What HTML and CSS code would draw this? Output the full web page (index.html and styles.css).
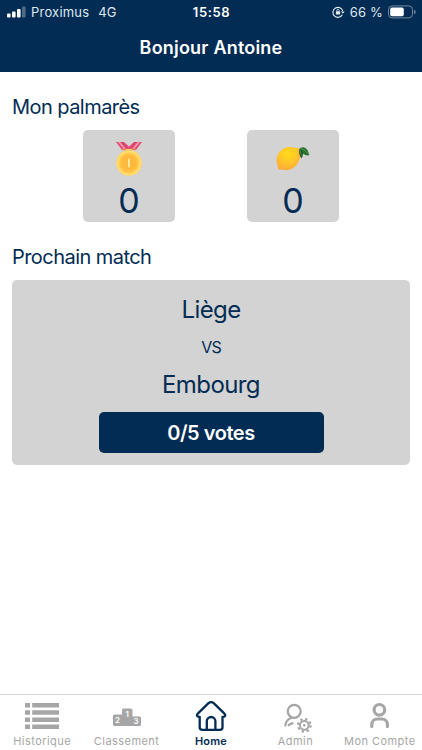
FILE: index.html
```html
<!DOCTYPE html>
<html lang="fr">
<head>
    <meta charset="UTF-8">
    <meta name="viewport" content="width=device-width, initial-scale=1.0">
    <title>Bonjour Antoine</title>
    <link rel="stylesheet" href="styles.css">
</head>
<body>
    <div class="app">
        <header class="header">
            <div class="status-bar">
                <div class="status-left">
                    <svg class="signal" width="19" height="12" viewBox="0 0 19 12" fill="#fff">
                        <rect x="0" y="7.5" width="3.6" height="4" rx="1"/>
                        <rect x="5" y="5.5" width="3.6" height="6" rx="1"/>
                        <rect x="10" y="3" width="3.6" height="8.5" rx="1"/>
                        <rect x="15" y="0.5" width="3.6" height="11" rx="1" opacity="0.3"/>
                    </svg>
                    <span class="carrier">Proximus</span>
                    <span class="network">4G</span>
                </div>
                <span class="time">15:58</span>
                <div class="status-right">
                    <svg width="13" height="12" viewBox="0 0 13 12" fill="none" stroke="#e6ecf3">
                        <path d="M10.3 8.8A5 5 0 1 1 10.8 5.2" stroke-width="1.1"/>
                        <path d="M9 5.4h3.6l-1.8 2.4z" fill="#e6ecf3" stroke="none"/>
                        <rect x="3.9" y="5.3" width="4.2" height="3.3" rx=".5" fill="#e6ecf3" stroke="none"/>
                        <path d="M4.8 5.5V4.6a1.2 1.2 0 0 1 2.4 0v.9" stroke-width=".8"/>
                    </svg>
                    <span class="battery-level">66 %</span>
                    <svg class="battery" width="28" height="14" viewBox="0 0 28 14">
                        <rect x=".5" y=".9" width="24" height="12" rx="3.6" fill="none" stroke="#7489a1"/>
                        <rect x="2.2" y="2.6" width="13.6" height="8.6" rx="1.8" fill="#fff"/>
                        <path d="M26 4.8a2.3 2.3 0 0 1 0 4.4z" fill="#7489a1"/>
                    </svg>
                </div>
            </div>
            <h1>Bonjour Antoine</h1>
        </header>

        <main class="content">
            <h2>Mon palmarès</h2>
            <div class="awards">
                <div class="award">
                    <svg width="34" height="36" viewBox="0 0 34 36">
                        <path d="M4 2h8l5 4.5L22 2h8l-6 8H10z" fill="#e84c75"/>
                        <path d="M7 2l6 7M27 2l-6 7" stroke="#f7a3b5" stroke-width="1.3"/>
                        <path d="M10 2l6 7M24 2l-6 7" stroke="#b53b69" stroke-width=".8"/>
                        <path d="M10 9.5h14" stroke="#e8804f" stroke-width="1.5"/>
                        <rect x="14" y="9" width="6" height="3" fill="#f1cc79"/>
                        <circle cx="17" cy="23" r="12.8" fill="#ffd45c"/>
                        <circle cx="17" cy="23" r="11.6" fill="none" stroke="#ffe27a"/>
                        <circle cx="17" cy="23" r="9.4" fill="#fdb93b"/>
                        <circle cx="17" cy="23" r="8.2" fill="none" stroke="#ffca51" stroke-width=".8"/>
                        <rect x="16" y="18.5" width="2" height="9" rx=".8" fill="#ffe99a"/>
                    </svg>
                    <span class="score">0</span>
                </div>
                <div class="award">
                    <svg width="34" height="36" viewBox="0 0 34 36">
                        <defs>
                            <radialGradient id="lemon" cx=".48" cy=".3" r=".7">
                                <stop offset="0" stop-color="#ffdc16"/>
                                <stop offset=".55" stop-color="#ffc52a"/>
                                <stop offset="1" stop-color="#ffaa38"/>
                            </radialGradient>
                        </defs>
                        <path d="M2.2 29.6C2.6 26.5 0.4 24.5 0.6 19.6 0.9 12.5 7 7.3 13.5 7c3.5-.2 5.5 1.3 8.8 1 2.3 1.5 1.2 3.2 1.8 5.5.8 3.5-.8 8.5-4.3 12.300-3.500 3.800-8 5.200-12.300 3.900-2-.6-3.600.7-5.300-.1z" fill="url(#lemon)"/>
                        <path d="M23 9.200C25.500 5.500 32 6.500 33.300 15.300 28.600 16 25.500 13 24.600 9.500z" fill="#28722f"/>
                        <path d="M23.600 9C22.500 12 23.300 16 25.500 18.300 27.500 15.500 27.500 11.500 24.500 9z" fill="#17561f"/>
                        <path d="M24.500 8.700c3 .3 6 2.400 8 5.700M24 10l1.400 6" fill="none" stroke="#70a767" stroke-width=".6"/>
                    </svg>
                    <span class="score">0</span>
                </div>
            </div>

            <h2>Prochain match</h2>
            <section class="match">
                <p class="team">Liège</p>
                <p class="versus">VS</p>
                <p class="team">Embourg</p>
                <button class="btn">0/5 votes</button>
            </section>
        </main>

        <nav class="tab-bar">
            <a class="tab">
                <svg width="34" height="34" viewBox="0 0 34 34" fill="currentColor">
                    <path d="M0 4h5v4.500H0zM7.200 4H34v4.500H7.200zM0 11.200h5v4.500H0zM7.200 11.200H34v4.500H7.200zM0 18.400h5v4.500H0zM7.200 18.400H34v4.500H7.200zM0 25.600h5v4.500H0zM7.200 25.600H34v4.500H7.200z"/>
                </svg>
                <span>Historique</span>
            </a>
            <a class="tab">
                <svg width="34" height="34" viewBox="0 0 34 34" fill="currentColor">
                    <path d="M3 17q0-1.500 1.500-1.500H12V11q0-1.500 1.500-1.500h7.500q1.500 0 1.500 1.500v6.500H29.500q1.500 0 1.500 1.500v6.500q0 1.500-1.500 1.500h-25Q3 27 3 25.500z"/>
                    <g class="podium-numbers">
                        <text x="7.600" y="24.300">2</text>
                        <text x="17.300" y="17.800">1</text>
                        <text x="26" y="25.300">3</text>
                    </g>
                </svg>
                <span>Classement</span>
            </a>
            <a class="tab active">
                <svg width="34" height="34" viewBox="0 0 34 34" fill="none" stroke="currentColor" stroke-width="2.300" stroke-linejoin="round" stroke-linecap="round">
                    <path d="M5.700 17.800v10.400q0 2.600 2.600 2.600h17.600q2.600 0 2.600-2.600V17.800c3 .3 3.500-1.900 1.700-3.500L19.700 4.200q-2.600-2.200-5.200 0L4 14.300c-1.800 1.600-1.300 3.800 1.700 3.500z"/>
                    <path d="M12.800 30.600v-8.300a4.300 4.300 0 0 1 8.600 0v8.300"/>
                </svg>
                <span>Home</span>
            </a>
            <a class="tab">
                <svg width="34" height="34" viewBox="0 0 34 34" fill="none" stroke="currentColor">
                    <circle cx="16.200" cy="12.300" r="6.500" stroke-width="2.300"/>
                    <path d="M7.300 27.500c0-4.500 2.200-7.400 6.300-8.700M9.800 26.500l5.500-2.800" stroke-width="2.200"/>
                    <circle cx="26.300" cy="26.300" r="4.400" stroke-width="2"/>
                    <circle cx="26.300" cy="26.300" r="6.300" stroke-width="2.200" stroke-dasharray="2.400 2.548"/>
                    <circle cx="26.300" cy="26.300" r="1.200" fill="currentColor" stroke="none"/>
                </svg>
                <span>Admin</span>
            </a>
            <a class="tab">
                <svg width="34" height="34" viewBox="0 0 34 34" fill="none" stroke="currentColor" stroke-width="3.200" stroke-linecap="round">
                    <circle cx="16.400" cy="10.800" r="5.300"/>
                    <path d="M8.800 27.500v-2a5.500 5.500 0 0 1 5.500-5.500h4.600a5.500 5.500 0 0 1 5.500 5.500v2"/>
                </svg>
                <span>Mon Compte</span>
            </a>
        </nav>
    </div>
</body>
</html>
```
FILE: styles.css
```css
:root {
    --primary-color: #022c53;
    --card-bg: #d3d3d3;
    --tab-color: #a6a6a6;
    --border-color: #d4d4d4;
}

* {
    margin: 0;
    padding: 0;
    box-sizing: border-box;
    font-family: Inter, 'Helvetica Neue', 'Liberation Sans', sans-serif;
}

body {
    background-color: #fff;
    color: var(--primary-color);
}

svg {
    display: block;
    flex-shrink: 0;
}

.app {
    display: flex;
    flex-direction: column;
    height: 100vh;
    min-height: 750px;
}

.header {
    height: 72px;
    background-color: var(--primary-color);
    color: #fff;
}

.status-bar {
    display: grid;
    grid-template-columns: 1fr auto 1fr;
    align-items: center;
    height: 24px;
    padding: 0 6px 0 7px;
    font-size: 13px;
    line-height: 24px;
}

.status-left,
.status-right {
    display: flex;
    align-items: center;
    color: #dfe7ef;
}

.status-right {
    justify-content: flex-end;
}

.carrier {
    margin-left: 5px;
    letter-spacing: 0.2px;
}

.network {
    margin-left: 9px;
}

.time {
    font-weight: 600;
    letter-spacing: 0.6px;
}

.battery-level {
    margin: 0 5px 0 5px;
    letter-spacing: 0.2px;
}

h1 {
    font-size: 18px;
    font-weight: 600;
    line-height: 48px;
    text-align: center;
    letter-spacing: 0.2px;
}

.content {
    flex: 1;
    padding: 23px 12px 0;
}

h2 {
    font-size: 20px;
    font-weight: 400;
    line-height: 24px;
    letter-spacing: -0.55px;
}

.awards {
    display: flex;
    justify-content: center;
    gap: 72px;
    margin: 11px 0 23px;
}

.award {
    display: flex;
    flex-direction: column;
    align-items: center;
    width: 92px;
    height: 92px;
    padding-top: 10px;
    background-color: var(--card-bg);
    border-radius: 5px;
}

.score {
    margin-top: 5px;
    font-size: 34px;
    line-height: 40px;
}

.match {
    display: flex;
    flex-direction: column;
    align-items: center;
    height: 185px;
    margin-top: 11px;
    padding-top: 15px;
    background-color: var(--card-bg);
    border-radius: 5px;
}

.team {
    font-size: 24px;
    line-height: 30px;
    letter-spacing: -0.6px;
}

.versus {
    margin: 12px 0 13px;
    font-size: 16px;
    line-height: 20px;
    letter-spacing: -0.8px;
}

.btn {
    width: 225px;
    height: 41px;
    margin-top: 12px;
    border: none;
    border-radius: 5px;
    background-color: var(--primary-color);
    color: #fff;
    font-size: 20px;
    font-weight: 600;
    letter-spacing: -0.45px;
}

.tab-bar {
    display: grid;
    grid-template-columns: repeat(5, 1fr);
    height: 56px;
    border-top: 1px solid var(--border-color);
}

.tab {
    display: flex;
    flex-direction: column;
    align-items: center;
    padding-top: 4px;
    color: var(--tab-color);
    font-size: 11px;
    line-height: 14px;
    white-space: nowrap;
}

.tab span {
    margin-top: 1px;
    letter-spacing: 0.45px;
}

.tab.active {
    color: var(--primary-color);
    font-weight: 600;
}

.tab.active span {
    letter-spacing: 0.2px;
}

.podium-numbers {
    fill: #fff;
    font-size: 8px;
    font-weight: 600;
    text-anchor: middle;
}
```
